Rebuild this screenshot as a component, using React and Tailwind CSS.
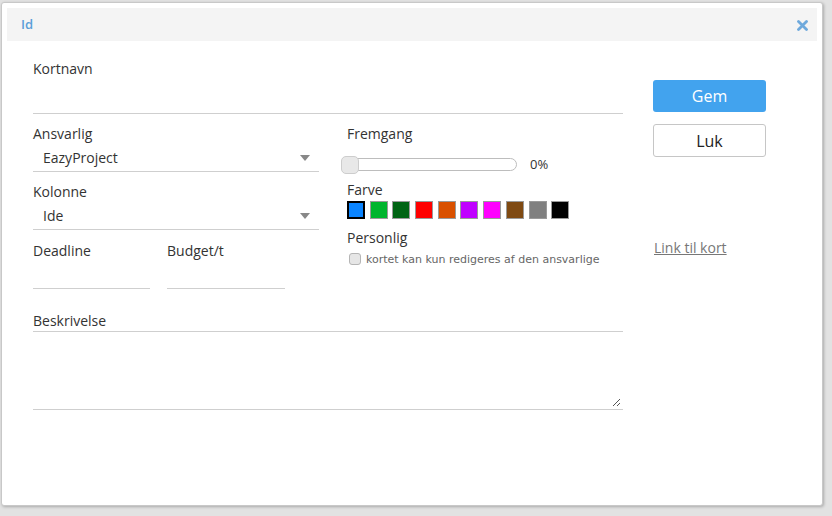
import React from "react";

const swatches = [
  { c: "#0a84ff", sel: true },
  { c: "#00b52e" },
  { c: "#006414" },
  { c: "#ff0000" },
  { c: "#d95000" },
  { c: "#c000ff" },
  { c: "#ff00ff" },
  { c: "#7f4a12" },
  { c: "#808080" },
  { c: "#000000" },
];

function Caret() {
  return (
    <svg width="10" height="6" viewBox="0 0 10 6" className="mr-[9px]">
      <path d="M0 0 L10 0 L5 6 Z" fill="#888" />
    </svg>
  );
}

export default function App() {
  return (
    <div
      className="w-[832px] h-[516px] bg-[#e2e2e2] overflow-hidden text-[#333]"
      style={{ fontFamily: '"Open Sans", sans-serif' }}
    >
      <div className="ml-[1px] mt-[2px] w-[822px] h-[504px] bg-white border border-[#c8c8c8] rounded-[3px] shadow-[1px_1px_3px_rgba(0,0,0,0.25)] p-[5px] flex flex-col">
        {/* header */}
        <div className="h-[33px] bg-[#f4f4f4] flex items-center justify-between px-[14px] shrink-0">
          <span className="text-[13px] font-semibold text-[#5a9fd8]">Id</span>
          <svg width="11" height="11" viewBox="0 0 11 11" className="mr-[-5px] mt-[1px]">
            <path d="M1.5 1.5 L9.5 9.5 M9.5 1.5 L1.5 9.5" stroke="#6ea9dc" strokeWidth="2.8" strokeLinecap="round" />
          </svg>
        </div>

        <div className="flex pl-[26px] pt-[18px]">
          {/* form */}
          <div className="w-[590px] flex flex-col">
            <div className="text-[14px] leading-[20px]">Kortnavn</div>
            <div className="h-[35px] border-b border-[#cfcfcf]"></div>

            <div className="flex mt-[10px]">
              {/* left col */}
              <div className="w-[286px] flex flex-col">
                <div className="text-[14px] leading-[20px]">Ansvarlig</div>
                <div className="h-[28px] border-b border-[#cfcfcf] flex items-center justify-between pl-[10px]">
                  <span className="text-[14px]">EazyProject</span>
                  <Caret />
                </div>
                <div className="text-[14px] leading-[20px] mt-[10px]">Kolonne</div>
                <div className="h-[28px] border-b border-[#cfcfcf] flex items-center justify-between pl-[10px]">
                  <span className="text-[14px]">Ide</span>
                  <Caret />
                </div>
                <div className="flex gap-[17px] mt-[11px]">
                  <div className="w-[117px]">
                    <div className="text-[14px] leading-[20px]">Deadline</div>
                    <div className="h-[28px] border-b border-[#cfcfcf]"></div>
                  </div>
                  <div className="w-[118px]">
                    <div className="text-[14px] leading-[20px]">Budget/t</div>
                    <div className="h-[28px] border-b border-[#cfcfcf]"></div>
                  </div>
                </div>
              </div>

              {/* middle col */}
              <div className="ml-[28px] flex flex-col">
                <div className="text-[14px] leading-[20px]">Fremgang</div>
                <div className="flex items-center mt-[11px] ml-[-6px] h-[18px]">
                  <div className="relative w-[176px] h-[13px] border border-[#bdbdbd] rounded-[7px] bg-white">
                    <div className="absolute left-[-1px] top-[-3px] w-[18px] h-[18px] rounded-[5px] bg-[#e8e8e8] border border-[#cdcdcd]"></div>
                  </div>
                  <span className="text-[13px] ml-[13px] mt-[1px]">0%</span>
                </div>
                <div className="text-[14px] leading-[20px] mt-[7px]">Farve</div>
                <div className="flex gap-[4.7px] mt-[1px]">
                  {swatches.map((s, i) => (
                    <div
                      key={i}
                      className={s.sel ? "w-[18px] h-[18px] border-2 border-black" : "w-[18px] h-[18px] border border-[#9a9a9a]"}
                      style={{ backgroundColor: s.c }}
                    ></div>
                  ))}
                </div>
                <div className="text-[14px] leading-[20px] mt-[9px]">Personlig</div>
                <div className="flex items-center mt-[1px] ml-[2px]">
                  <div className="w-[12px] h-[12px] rounded-[3px] border border-[#b5b5b5] bg-[#e6e6e6]"></div>
                  <span
                    className="text-[11px] text-[#666] ml-[5px] mt-[3px]"
                    style={{ fontFamily: '"DejaVu Sans", sans-serif' }}
                  >
                    kortet kan kun redigeres af den ansvarlige
                  </span>
                </div>
              </div>
            </div>

            <div className="text-[14px] leading-[20px] mt-[22px]">Beskrivelse</div>
            <div className="relative h-[79px] border-t border-b border-[#cfcfcf]">
              <svg width="9" height="9" viewBox="0 0 9 9" className="absolute right-[2px] bottom-[2px]">
                <path d="M8 1 L1 8 M8 5 L5 8" stroke="#555" strokeWidth="1" />
              </svg>
            </div>
          </div>

          {/* right col */}
          <div className="ml-[30px] w-[113px] flex flex-col pt-[21px]">
            <div className="h-[32px] rounded-[3px] bg-[#42a3ee] text-white text-[16px] flex items-center justify-center">
              Gem
            </div>
            <div className="h-[33px] mt-[12px] rounded-[3px] bg-white border border-[#c6c6c6] text-[#222] text-[16px] flex items-center justify-center">
              Luk
            </div>
            <div className="mt-[81px] ml-[1px] text-[14px] text-[#777] underline leading-[20px]">
              Link til kort
            </div>
          </div>
        </div>
      </div>
    </div>
  );
}
